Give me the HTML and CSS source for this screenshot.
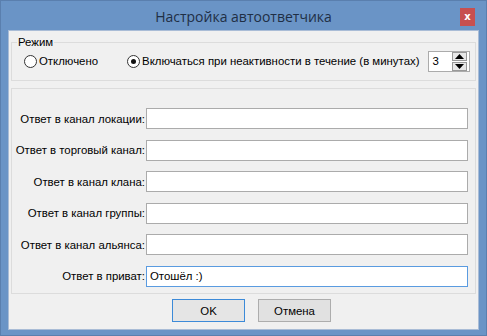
FILE: index.html
```html
<!DOCTYPE html>
<html lang="ru">
<head>
  <meta charset="utf-8"/>
  <title>Настройка автоответчика</title>
  <link rel="stylesheet" href="styles.css">
</head>
<body>
  <div class="window">
    <div class="titlebar">
      <span></span>
      <div class="title">Настройка автоответчика</div>
      <button class="close-btn" title="Закрыть">x</button>
    </div>
    <div class="client">
      <fieldset class="group mode">
        <legend>Режим</legend>
        <div class="mode-row">
          <label class="radio"><span class="radio-dot"></span>Отключено</label>
          <label class="radio"><span class="radio-dot checked"></span>Включаться при неактивности в течение (в минутах)</label>
          <div class="spin">
            <span class="spin-value">3</span>
            <div class="spin-btns">
              <span class="spin-btn"><svg width="9" height="5" viewBox="0 0 9 5"><path d="M4.5 0 L9 5 L0 5 Z" fill="#000"/></svg></span>
              <span class="spin-btn"><svg width="9" height="5" viewBox="0 0 9 5"><path d="M0 0 L9 0 L4.5 5 Z" fill="#000"/></svg></span>
            </div>
          </div>
        </div>
      </fieldset>
      <div class="group replies">
        <label class="reply-label">Ответ в канал локации:</label><div class="field"></div>
        <label class="reply-label">Ответ в торговый канал:</label><div class="field"></div>
        <label class="reply-label">Ответ в канал клана:</label><div class="field"></div>
        <label class="reply-label">Ответ в канал группы:</label><div class="field"></div>
        <label class="reply-label">Ответ в канал альянса:</label><div class="field"></div>
        <label class="reply-label">Ответ в приват:</label><div class="field focused">Отошёл :)</div>
      </div>
      <div class="buttons">
        <button class="btn default">OK</button>
        <button class="btn">Отмена</button>
      </div>
    </div>
  </div>
</body>
</html>
```

FILE: styles.css
```css
html, body { margin: 0; padding: 0; background: #6a94c6; }
body { font-family: "Liberation Sans", Arial, sans-serif; font-size: 11.4px; color: #000; }
.window { width: 487px; height: 336px; background: #6a94c6; display: flex; flex-direction: column; box-sizing: border-box; border: 1px solid #5a7fae; }
.titlebar { height: 29px; display: grid; grid-template-columns: 1fr auto 1fr; align-items: center; }
.title { font-family: "Open Sans", "Noto Sans", sans-serif; font-size: 14px; color: #1f2f45; padding-top: 1px; }
.close-btn { justify-self: end; margin-right: 11px; margin-top: 2px; width: 15px; height: 18px; border: none; padding: 0; background: #c75050; color: #fff; font-family: "DejaVu Sans", sans-serif; font-weight: bold; font-size: 10px; line-height: 16px; }
.client { margin: 0 7px; height: 298px; background: #f0f0f0; border: 1px solid #a9bcd6; display: flex; flex-direction: column; }
.group { border: 1px solid #dcdcdc; margin: 0 2px; box-sizing: border-box; }
.mode { margin-top: 4px; padding: 0; height: 46px; }
.mode legend { padding: 0 1px; margin-left: 5px; line-height: 14px; }
.mode-row { display: flex; align-items: center; height: 22px; margin-top: 1px; white-space: nowrap; }
.radio { display: flex; align-items: center; margin-left: 12px; }
.radio + .radio { margin-left: 29px; }
.radio-dot { width: 11px; height: 11px; border: 1px solid #333; border-radius: 50%; background: #fff; margin-right: 2px; display: flex; align-items: center; justify-content: center; }
.radio-dot.checked::after { content: ""; width: 5px; height: 5px; border-radius: 50%; background: #111; }
.spin { margin-left: 9px; width: 40px; height: 19px; border: 1px solid #ababab; background: #fff; display: flex; align-items: center; justify-content: space-between; }
.spin-value { padding-left: 3px; }
.spin-btns { display: flex; flex-direction: column; gap: 1px; margin-right: 2px; }
.spin-btn { width: 13px; height: 7px; border: 1px solid #999; background: #e8e8e8; display: flex; align-items: center; justify-content: center; }
.replies { margin-top: 7px; height: 206px; display: grid; grid-template-columns: 133px 322px; grid-auto-rows: 21px; row-gap: 10.6px; column-gap: 1px; padding-top: 19px; align-items: center; }
.reply-label { text-align: right; white-space: nowrap; }
.field { height: 21px; box-sizing: border-box; border: 1px solid #ababab; background: #fff; padding: 0 3px; line-height: 19px; }
.field.focused { border-color: #5a9be0; }
.buttons { display: flex; gap: 13px; padding-left: 163px; margin-top: 5px; }
.btn { width: 73px; height: 23px; font-family: inherit; font-size: 11.4px; background: #e1e1e1; border: 1px solid #adadad; padding: 0; color: #000; }
.btn.default { border-color: #3c8ad8; background: #e5e5e5; }
```
